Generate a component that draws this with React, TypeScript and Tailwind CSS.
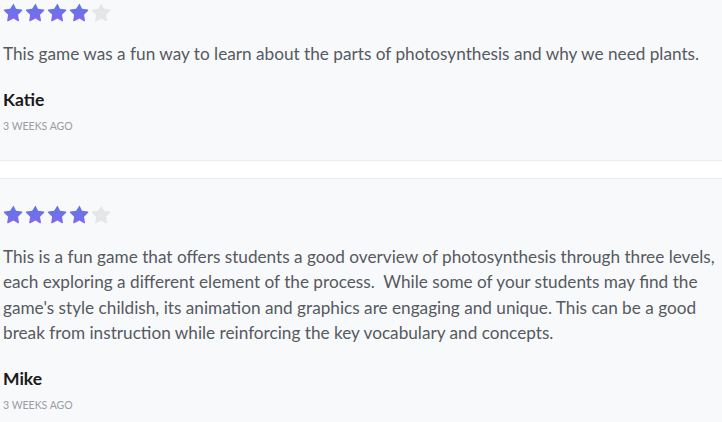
import React from 'react';

function Star({ filled, id }: { filled: boolean; id: string }) {
  return (
    <svg width="21" height="20" viewBox="0 0 24 24">
      <defs>
        <linearGradient id={id} x1="0" y1="0" x2="0" y2="1">
          <stop offset="0%" stopColor="#5a79e0" />
          <stop offset="100%" stopColor="#8467f0" />
        </linearGradient>
      </defs>
      <path
        d="M12 1.8l3.05 6.3 6.85.95c.7.1 1 .95.48 1.45l-4.97 4.8 1.2 6.8c.12.7-.62 1.23-1.25.9L12 19.75l-6.36 3.25c-.63.33-1.37-.2-1.25-.9l1.2-6.8-4.97-4.8c-.52-.5-.22-1.35.48-1.45l6.85-.95z"
        fill={filled ? `url(#${id})` : '#e6e6e8'}
      />
    </svg>
  );
}

function Rating({ value, prefix }: { value: number; prefix: string }) {
  return (
    <div className="flex gap-px">
      {[1, 2, 3, 4, 5].map(i => (
        <Star key={i} filled={i <= value} id={`${prefix}-${i}`} />
      ))}
    </div>
  );
}

const reviews = [
  {
    name: 'Katie',
    when: '3 WEEKS AGO',
    rating: 4,
    text: 'This game was a fun way to learn about the parts of photosynthesis and why we need plants.',
  },
  {
    name: 'Mike',
    when: '3 WEEKS AGO',
    rating: 4,
    text: "This is a fun game that offers students a good overview of photosynthesis through three levels, each exploring a different element of the process.\u00a0 While some of your students may find the game's style childish, its animation and graphics are engaging and unique. This can be a good break from instruction while reinforcing the key vocabulary and concepts.",
  },
];

export default function App() {
  return (
    <div className="min-h-screen bg-[#f8f9fb] overflow-hidden" style={{ fontFamily: 'Lato, "Open Sans", sans-serif' }}>
      {reviews.map((r, idx) => (
        <div key={r.name}>
          {idx > 0 && <div className="h-[19px] bg-white border-y border-[#ebedf0]" />}
          <div className={`pl-[3px] ${idx === 0 ? 'pt-[2px] pb-[28px]' : 'pt-[25px] pb-[10px]'}`}>
            <Rating value={r.rating} prefix={`r${idx}`} />
            <p className={`${idx === 0 ? 'mt-[19px]' : 'mt-[20px]'} w-[722px] text-[17.2px] leading-[25.5px] text-[#555a60]`}>{r.text}</p>
            <div className="mt-[22px] text-[17.5px] font-bold text-[#1a1a1a] leading-[22px]">{r.name}</div>
            <div className="mt-[9px] text-[10.5px] text-[#9a9ca0] leading-[12px]">{r.when}</div>
          </div>
        </div>
      ))}
    </div>
  );
}
